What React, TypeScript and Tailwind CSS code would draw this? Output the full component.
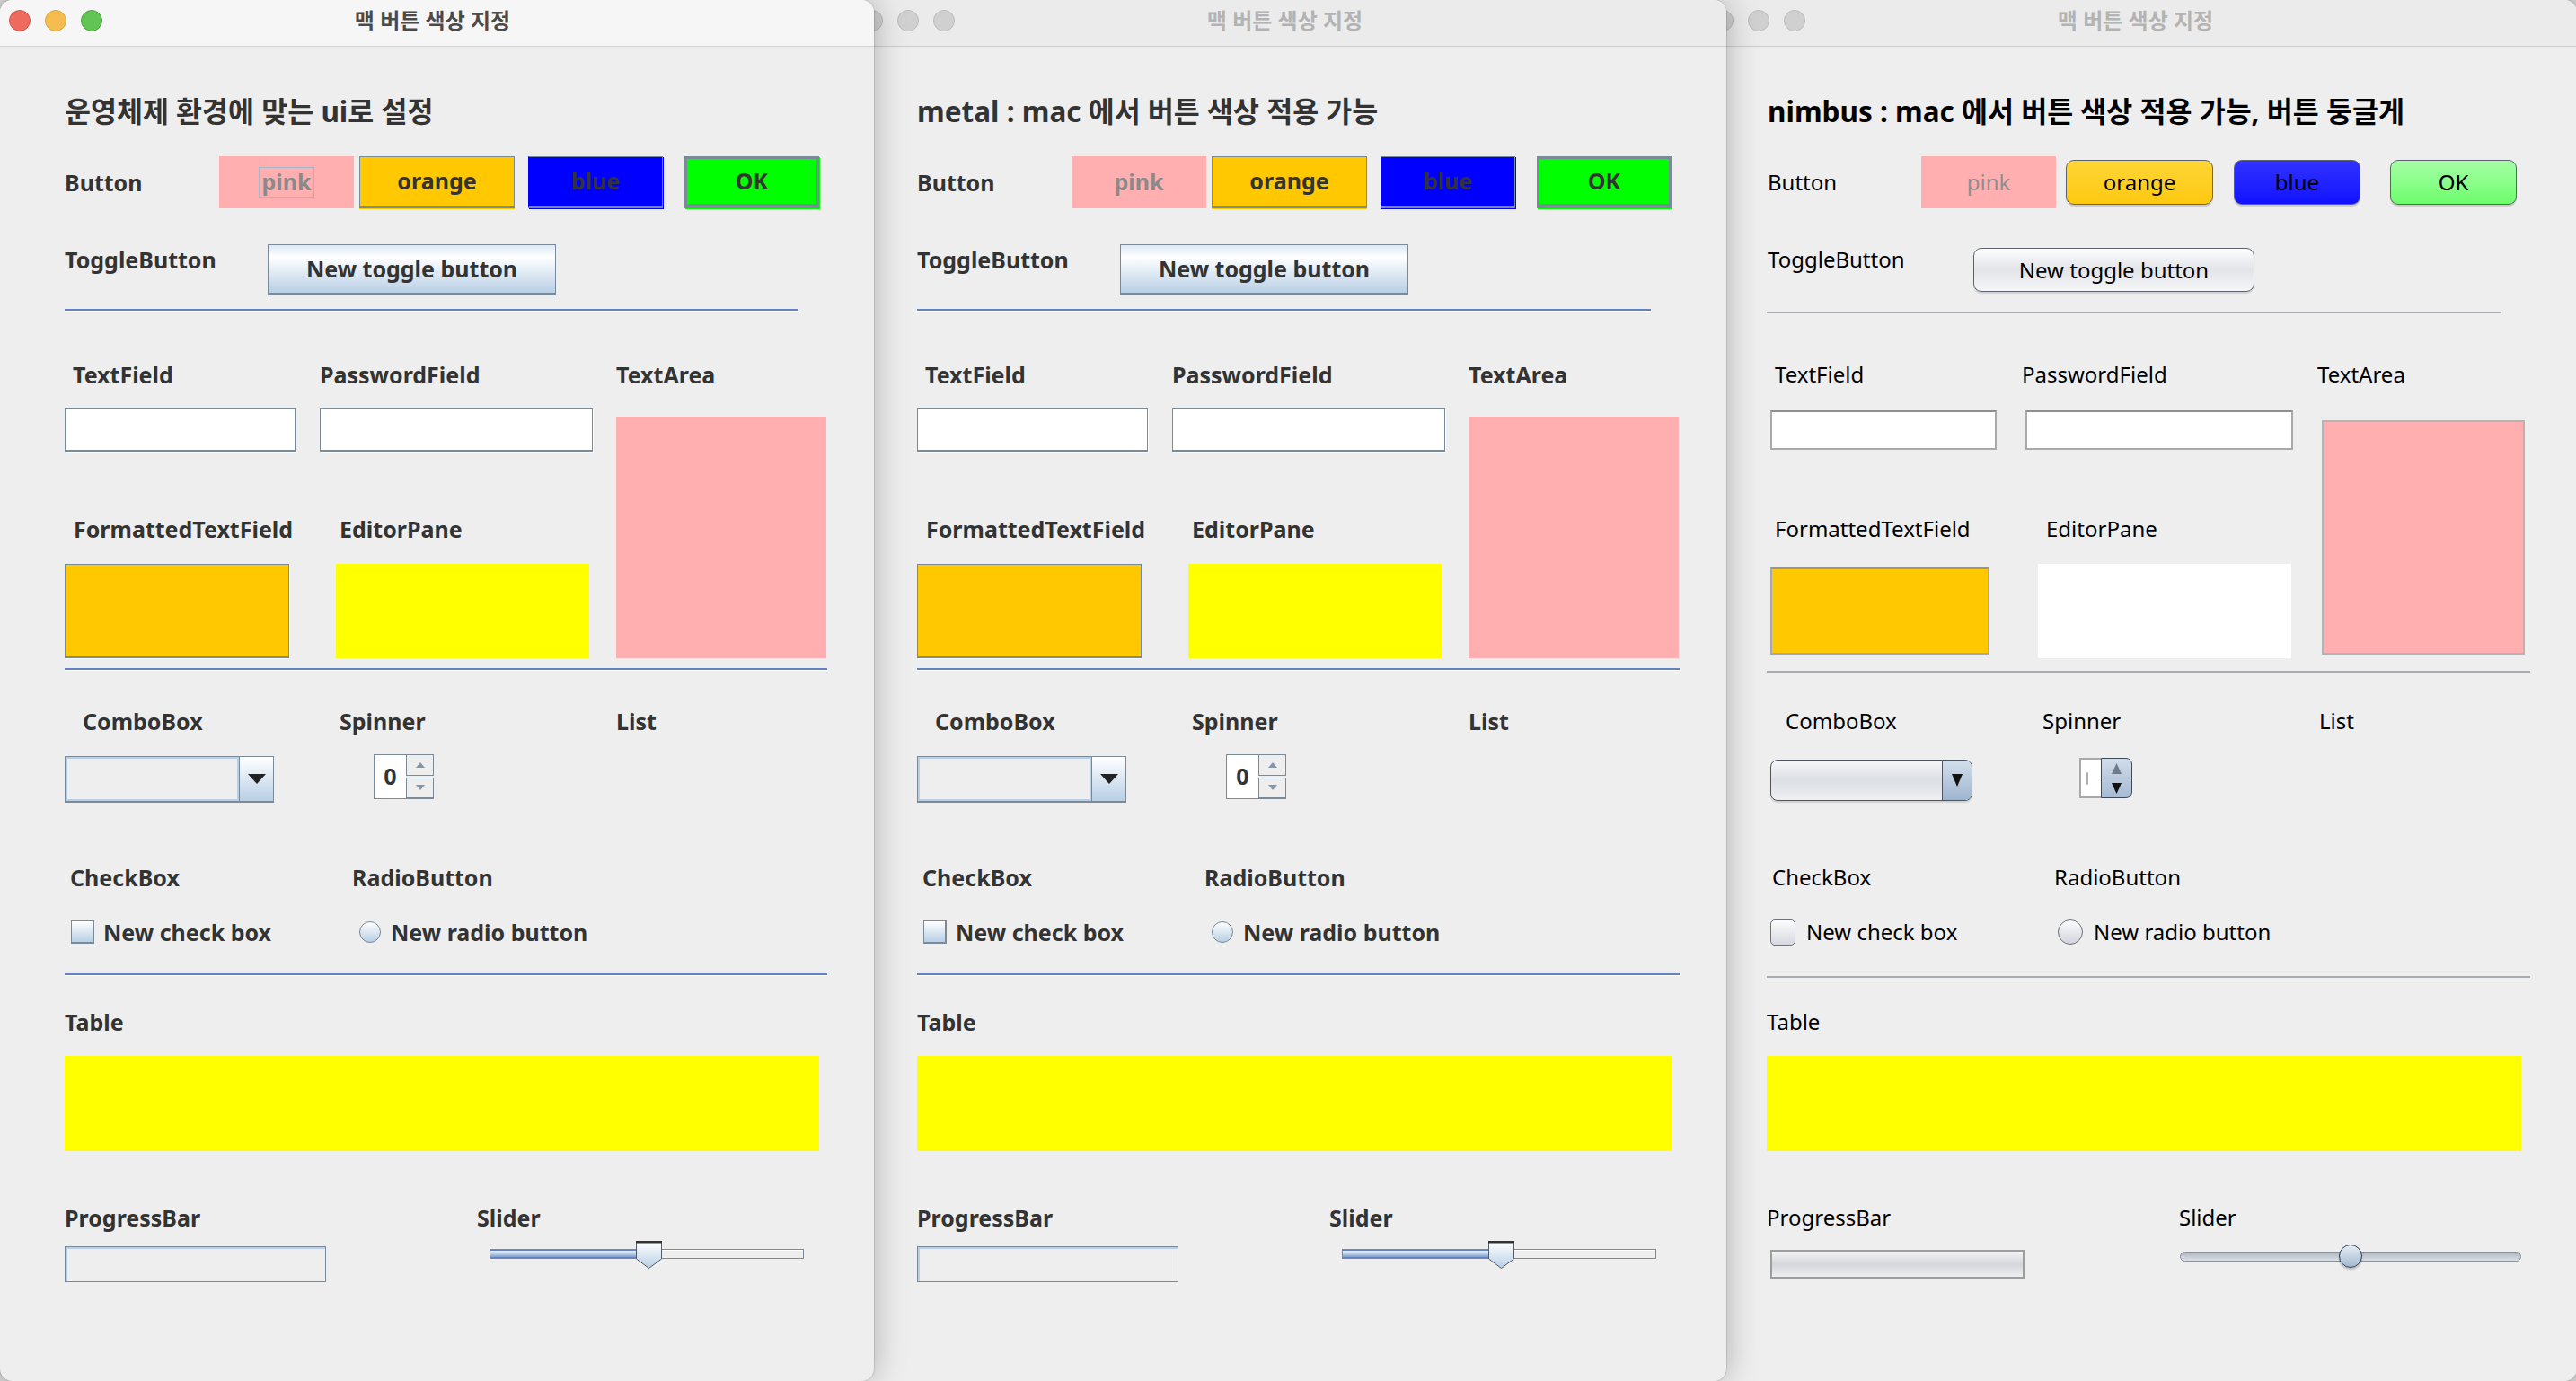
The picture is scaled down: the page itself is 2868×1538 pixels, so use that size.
import React from "react";

type Variant = "mac" | "metal" | "nimbus";

const FONT = "font-['Noto_Sans','Noto_Sans_CJK_KR',sans-serif]";

function Lights({ active }: { active: boolean }) {
  const cls = active
    ? ["bg-[#ee6a5f] border-[#d5574c]", "bg-[#f5bd4f] border-[#d9a23b]", "bg-[#61c454] border-[#4ea83f]"]
    : ["bg-[#d0d0d0] border-[#bababa]", "bg-[#d0d0d0] border-[#bababa]", "bg-[#d0d0d0] border-[#bababa]"];
  return (
    <div className="flex items-center gap-[16px] pl-[10px]">
      {cls.map((c, i) => (
        <div key={i} className={`h-[24px] w-[24px] rounded-full border ${c}`} />
      ))}
    </div>
  );
}

function TitleBar({ active }: { active: boolean }) {
  return (
    <div
      className={`grid h-[52px] shrink-0 grid-cols-[1fr_auto_1fr] items-center border-b pb-[6px] pr-[10px] ${
        active ? "border-[#d3d3d3] bg-[#f6f6f7]" : "border-[#cdcdcd] bg-[#ebebeb]"
      }`}
    >
      <Lights active={active} />
      <div className={`text-[24px] font-bold ${active ? "text-[#4a4a4a]" : "text-[#b3b3b3]"}`}>맥 버튼 색상 지정</div>
      <div />
    </div>
  );
}

function Sep({ n, wide }: { n: boolean; wide: boolean }) {
  if (n) {
    return (
      <div className={`h-[5px] shrink-0 pt-[3px] -ml-[1px] ${wide ? "w-[850px]" : "w-[818px]"}`}>
        <div className="h-[2px] w-full bg-[#a8abb2]" />
      </div>
    );
  }
  return (
    <div className={`h-[5px] shrink-0 ${wide ? "w-[849px]" : "w-[817px]"}`}>
      <div className="h-[2px] w-full bg-[#6382bf]" />
      <div className="h-[1px] w-full bg-white" />
    </div>
  );
}

function Lbl({ children, className = "" }: { children: React.ReactNode; className?: string }) {
  return <div className={`h-[24px] shrink-0 whitespace-nowrap leading-[24px] ${className}`}>{children}</div>;
}

function DownTri({ w, h, fill }: { w: number; h: number; fill: string }) {
  return (
    <svg width={w} height={h} viewBox={`0 0 ${w} ${h}`}>
      <polygon points={`0,0 ${w},0 ${w / 2},${h}`} fill={fill} />
    </svg>
  );
}
function UpTri({ w, h, fill }: { w: number; h: number; fill: string }) {
  return (
    <svg width={w} height={h} viewBox={`0 0 ${w} ${h}`}>
      <polygon points={`0,${h} ${w},${h} ${w / 2},0`} fill={fill} />
    </svg>
  );
}

function MetalThumb() {
  return (
    <svg width="29" height="31" viewBox="0 0 29 31">
      <defs>
        <linearGradient id="mt" x1="0" y1="0" x2="0" y2="1">
          <stop offset="0" stopColor="#ffffff" />
          <stop offset="1" stopColor="#b8cfe5" />
        </linearGradient>
      </defs>
      <polygon points="0.5,1 28.5,1 28.5,20 14.5,30.5 0.5,20" fill="url(#mt)" stroke="#555b63" strokeWidth="1" />
      <rect x="0" y="0" width="29" height="2.5" fill="#333333" />
    </svg>
  );
}

function Win({ v, heading, active, extra }: { v: Variant; heading: string; active: boolean; extra: string }) {
  const n = v === "nimbus";
  const txt = n ? "text-black font-normal text-[24px]" : "text-[#333333] font-bold text-[25px]";
  const mBtn = "flex items-center justify-center border border-[#7a8a99] border-b-[3px]";
  const nBtn =
    "flex h-[50px] items-center justify-center rounded-[9px] border-[1.5px] border-[#5d626c] shadow-[0_2px_1px_rgba(0,0,0,0.15)]";
  return (
    <div
      className={`relative flex h-[1538px] w-[973px] shrink-0 flex-col overflow-hidden rounded-[14px] bg-[#eeeeee] shadow-[0_0_36px_rgba(0,0,0,0.28)] ring-1 ring-black/10 ${FONT} ${extra}`}
    >
      <TitleBar active={active} />
      <div className={`flex flex-col pl-[72px] ${txt}`}>
        {/* heading */}
        <div className={`mt-[52px] h-[40px] whitespace-nowrap text-[31.5px] font-bold leading-[40px] ${n ? "text-black" : "text-[#333333]"}`}>
          {heading}
        </div>

        {/* Button row */}
        <div className="mt-[30px] flex h-[58px] items-center">
          <Lbl className={n ? "w-[171px]" : "w-[172px]"}>Button</Lbl>
          <div className="flex h-[58px] w-[150px] items-center justify-center bg-[#ffafaf]">
            {v === "mac" ? (
              <span className="flex h-[34px] items-center border border-[#a3b8cc] px-[2px] text-[#8a8a8a]">pink</span>
            ) : (
              <span className={n ? "text-[#8e8e8e]" : "text-[#8a8a8a]"}>pink</span>
            )}
          </div>
          {n ? (
            <>
              <div className={`${nBtn} ml-[11px] w-[164px] bg-linear-to-b from-[#ffd633] to-[#fdc80c]`}>orange</div>
              <div className={`${nBtn} ml-[23px] w-[141px] bg-linear-to-b from-[#3030ff] to-[#1010ff]`}>blue</div>
              <div className={`${nBtn} ml-[33px] w-[141px] bg-linear-to-b from-[#a4ffa4] to-[#6cfc6c]`}>OK</div>
            </>
          ) : (
            <>
              <div className={`${mBtn} ml-[6px] h-[58px] w-[173px] bg-[#ffc800] shadow-[0_1px_0_#ffc800]`}>orange</div>
              <div className={`${mBtn} ml-[15px] h-[58px] w-[150px] border-l-[#0000ff] bg-[#0000ff] shadow-[1px_1px_0_#0000ff]`}>blue</div>
              <div className="ml-[24px] flex h-[58px] w-[150px] items-center justify-center border-[3px] border-b-[5px] border-[#7a8a99] bg-[#00ff00] shadow-[1px_1px_0_#00ff00]">
                OK
              </div>
            </>
          )}
        </div>

        {/* Toggle row */}
        <div className="mt-[40px] flex h-[57px] items-start">
          <Lbl className={`mt-[5px] ${n ? "w-[229px]" : "w-[226px]"}`}>ToggleButton</Lbl>
          {n ? (
            <div className="mt-[4px] flex h-[49px] w-[313px] items-center justify-center rounded-[9px] border-[1.5px] border-[#5d626c] bg-linear-to-b from-[#fdfdfe] via-[#e2e4e8] to-[#f5f6f8] shadow-[0_2px_1px_rgba(0,0,0,0.12)]">
              New toggle button
            </div>
          ) : (
            <div className="flex h-[57px] w-[321px] items-center justify-center border border-b-[3px] border-[#7a8a99] bg-linear-to-b from-[#dde8f3] via-[#ffffff] via-25% to-[#b8cfe5]">
              New toggle button
            </div>
          )}
        </div>

        {/* Separator 1 at 344 */}
        <div className="mt-[15px]">
          <Sep n={n} wide={false} />
        </div>

        {/* Section 2 */}
        <div className="flex">
          <div className="flex w-[614px] shrink-0 flex-col">
            <div className="mt-[56px] flex">
              <Lbl className={n ? "w-[283px] pl-[8px]" : "w-[284px] pl-[9px]"}>TextField</Lbl>
              <Lbl>PasswordField</Lbl>
            </div>
            <div className="mt-[25px] flex h-[49px] items-center">
              {n ? (
                <>
                  <div className="ml-[3px] h-[44px] w-[252px] border-2 border-[#a9a9a9] border-t-[#8f8f8f] bg-white" />
                  <div className="ml-[32px] h-[44px] w-[298px] border-2 border-[#a9a9a9] border-t-[#8f8f8f] bg-white" />
                </>
              ) : (
                <>
                  <div className="h-[49px] w-[257px] border border-b-2 border-[#7a8a99] bg-white shadow-[1px_1px_0_#ffffff]" />
                  <div className="ml-[27px] h-[49px] w-[304px] border border-b-2 border-[#7a8a99] bg-white shadow-[1px_1px_0_#ffffff]" />
                </>
              )}
            </div>
            <div className="mt-[74px] flex">
              <Lbl className={n ? "w-[310px] pl-[8px]" : "w-[306px] pl-[10px]"}>FormattedTextField</Lbl>
              <Lbl>EditorPane</Lbl>
            </div>
            <div className="mt-[27px] flex h-[105px] items-center">
              {n ? (
                <>
                  <div className="ml-[3px] h-[97px] w-[244px] border-2 border-[#a9a9a9] border-t-[#959595] bg-[#ffc800]" />
                  <div className="ml-[54px] h-[105px] w-[282px] bg-white" />
                </>
              ) : (
                <>
                  <div className="h-[105px] w-[250px] border border-b-2 border-[#7a8a99] bg-[#ffc800] shadow-[1px_1px_0_#ffffff]" />
                  <div className="ml-[52px] h-[105px] w-[282px] bg-[#ffff00]" />
                </>
              )}
            </div>
          </div>
          <div className={`flex flex-col ${n ? "-ml-[2px]" : ""}`}>
            <Lbl className="mt-[56px]">TextArea</Lbl>
            {n ? (
              <div className="ml-[5px] mt-[39px] h-[261px] w-[226px] border-2 border-[#b4b4b4] bg-[#ffafaf]" />
            ) : (
              <div className="mt-[35px] h-[269px] w-[234px] bg-[#ffafaf]" />
            )}
          </div>
        </div>

        {/* Separator 2 at 744 */}
        <div className="mt-[11px]">
          <Sep n={n} wide={true} />
        </div>

        {/* Combo row */}
        <div className="mt-[42px] flex">
          <Lbl className="w-[306px] pl-[20px]">ComboBox</Lbl>
          <Lbl className="w-[308px]">Spinner</Lbl>
          <Lbl>List</Lbl>
        </div>
        <div className="mt-[25px] flex h-[54px] items-start">
          {n ? (
            <>
              <div className="ml-[3px] mt-[6px] flex h-[46px] w-[225px] overflow-hidden rounded-[8px] border-[1.5px] border-[#4f5560] bg-linear-to-b from-[#f6f7f9] via-[#dcdfe4] to-[#eef0f2] shadow-[0_2px_1px_rgba(0,0,0,0.12)]">
                <div className="flex-1" />
                <div className="flex w-[33px] items-center justify-center border-l-[1.5px] border-[#4f5560] bg-linear-to-b from-[#d3dfec] to-[#9fb5cf]">
                  <DownTri w={12} h={14} fill="#111111" />
                </div>
              </div>
              <div className="ml-[119px] mt-[4px] flex h-[45px] w-[59px]">
                <div className="flex w-[24px] items-center border-y-2 border-l-2 border-[#a9a9a9] bg-white pl-[6px]">
                  <div className="h-[14px] w-[2px] rounded-full bg-[#b0b0b0]" />
                </div>
                <div className="flex w-[35px] flex-col overflow-hidden rounded-r-[7px] border-[1.5px] border-[#3d4a5c] bg-linear-to-b from-[#d0dcea] to-[#a6bbd3]">
                  <div className="flex flex-1 items-center justify-center border-b border-[#3d4a5c]">
                    <UpTri w={11} h={12} fill="#6f7c8c" />
                  </div>
                  <div className="flex flex-1 items-center justify-center">
                    <DownTri w={11} h={12} fill="#111111" />
                  </div>
                </div>
              </div>
            </>
          ) : (
            <>
              <div className="mt-[2px] flex h-[52px] w-[233px] border border-b-2 border-[#7a8a99]">
                <div className="flex-1 border-2 border-[#b8cfe5] bg-[#eeeeee]" />
                <div className="flex w-[38px] items-center justify-center border-l border-[#7a8a99] bg-linear-to-b from-[#ffffff] to-[#b8cfe5]">
                  <DownTri w={20} h={11} fill="#222222" />
                </div>
              </div>
              <div className="ml-[111px] flex h-[50px] w-[67px]">
                <div className="flex w-[36px] items-center justify-center border border-r-0 border-[#7a8a99] bg-white text-[25px]">
                  0
                </div>
                <div className="flex w-[31px] flex-col gap-[2px]">
                  <div className="flex flex-1 items-center justify-center border border-[#7a8a99] bg-[#eeeeee]">
                    <UpTri w={10} h={6} fill="#8495a8" />
                  </div>
                  <div className="flex flex-1 items-center justify-center border border-b-2 border-[#7a8a99] bg-[#eeeeee]">
                    <DownTri w={10} h={6} fill="#8495a8" />
                  </div>
                </div>
              </div>
            </>
          )}
        </div>

        {/* CheckBox row */}
        <div className="mt-[71px] flex">
          <Lbl className={n ? "w-[319px] pl-[5px]" : "w-[320px] pl-[6px]"}>CheckBox</Lbl>
          <Lbl>RadioButton</Lbl>
        </div>
        <div className="mt-[36px] flex h-[26px] items-center">
          {n ? (
            <>
              <div className="flex w-[323px] items-center pl-[3px]">
                <div className="h-[29px] w-[28px] rounded-[5px] border-[1.5px] border-[#6d727b] bg-linear-to-b from-[#fcfcfd] to-[#d6d9de]" />
                <span className="ml-[12px] leading-[26px]">New check box</span>
              </div>
              <div className="h-[28px] w-[28px] rounded-full border-[1.5px] border-[#6d727b] bg-linear-to-b from-[#fcfcfd] to-[#d2d5db]" />
              <span className="ml-[12px] leading-[26px]">New radio button</span>
            </>
          ) : (
            <>
              <div className="flex w-[328px] items-center pl-[7px]">
                <div className="h-[26px] w-[26px] border-2 border-[#7a8a99] border-t border-l bg-linear-to-b from-[#ffffff] to-[#b8cfe5]" />
                <span className="ml-[10px] leading-[26px]">New check box</span>
              </div>
              <div className="h-[24px] w-[24px] rounded-full border-[1.5px] border-[#7a8a99] bg-linear-to-b from-[#ffffff] to-[#b8cfe5]" />
              <span className="ml-[11px] leading-[26px]">New radio button</span>
            </>
          )}
        </div>

        {/* Separator 3 at 1084 */}
        <div className="mt-[33px]">
          <Sep n={n} wide={true} />
        </div>

        {/* Table */}
        <Lbl className={`mt-[37px] ${n ? "-ml-[1px]" : ""}`}>Table</Lbl>
        <div className={`mt-[26px] h-[106px] w-[840px] bg-[#ffff00] ${n ? "-ml-[1px]" : ""}`} />

        {/* ProgressBar / Slider */}
        <div className={`mt-[62px] flex ${n ? "-ml-[1px]" : ""}`}>
          <Lbl className="w-[459px]">ProgressBar</Lbl>
          <Lbl>Slider</Lbl>
        </div>
        <div className="mt-[14px] flex h-[46px] items-start">
          {n ? (
            <>
              <div className="ml-[3px] mt-[10px] h-[32px] w-[283px] border-2 border-[#9d9d9d] bg-linear-to-b from-[#f3f3f4] via-[#d4d6db] to-[#eeeff1]" />
              <div className="relative ml-[173px] h-[31px] w-[380px]">
                <div className="mt-[12px] h-[11px] w-full rounded-full border border-[#8a919b] bg-linear-to-b from-[#b1b7c0] to-[#dde0e5]" />
                <div className="absolute left-[177px] top-[4px] h-[26px] w-[26px] rounded-full border-[1.5px] border-[#2c3d54] bg-linear-to-b from-[#e6edf5] to-[#a3b9d1] shadow-[0_2px_2px_rgba(0,0,0,0.2)]" />
              </div>
            </>
          ) : (
            <>
              <div className="mt-[6px] h-[40px] w-[291px] border border-[#7a8a99]">
                <div className="h-full w-full border-t-2 border-l-2 border-[#b8cfe5] bg-[#eeeeee]" />
              </div>
              <div className="relative ml-[182px] h-[31px] w-[350px]">
                <div className="mt-[9px] flex h-[11px] w-full border border-[#7a8a99] bg-[#eeeeee]">
                  <div className="h-full w-[166px] border-y border-[#6382bf] bg-linear-to-b from-[#e8eff8] via-[#b8cfe5] to-[#7f9cd0]" />
                  <div className="h-full flex-1 border-t border-white" />
                </div>
                <div className="absolute left-[163px] top-0">
                  <MetalThumb />
                </div>
              </div>
            </>
          )}
        </div>
      </div>
    </div>
  );
}

export default function App() {
  return (
    <div className="flex h-[1538px] w-[2868px] overflow-hidden bg-[#d8d8d8]">
      <Win v="mac" heading="운영체제 환경에 맞는 ui로 설정" active={true} extra="z-30" />
      <Win v="metal" heading="metal : mac 에서 버튼 색상 적용 가능" active={false} extra="z-20 -ml-[24px]" />
      <Win v="nimbus" heading="nimbus : mac 에서 버튼 색상 적용 가능, 버튼 둥글게" active={false} extra="z-10 -ml-[26px]" />
    </div>
  );
}
